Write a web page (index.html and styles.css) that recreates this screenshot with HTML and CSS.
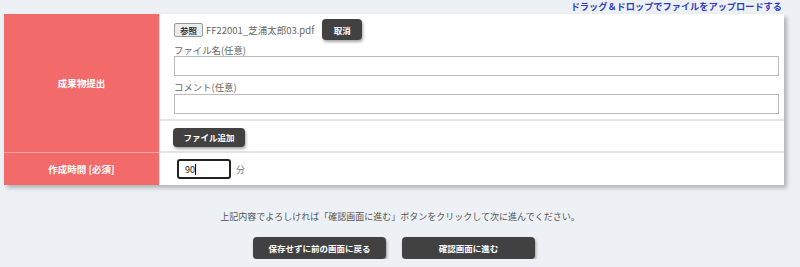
FILE: index.html
```html
<!DOCTYPE html>
<html lang="ja">
<head>
  <meta charset="UTF-8" />
  <title>成果物提出</title>
  <meta name="viewport" content="width=device-width, initial-scale=1.0"/>
  <link rel="stylesheet" href="styles.css">
</head>
<body>
  <div class="dnd">ドラッグ＆ドロップでファイルをアップロードする</div>

  <!-- Form Table -->
  <table class="form-table">
    <tr>
      <th rowspan="2">成果物提出</th>
      <td class="upload-cell">
        <div class="file-row">
          <span class="browse">参照</span>
          <span class="file-name">FF22001_芝浦太郎03.pdf</span>
          <button class="btn btn-cancel">取消</button>
        </div>
        <label class="field-label">ファイル名(任意)</label>
        <input class="text-input" type="text" />
        <label class="field-label">コメント(任意)</label>
        <input class="text-input" type="text" />
      </td>
    </tr>
    <tr>
      <td class="add-cell">
        <button class="btn btn-add">ファイル追加</button>
      </td>
    </tr>
    <tr>
      <th class="time-head">作成時間 [必須]</th>
      <td class="time-cell">
        <span class="time-input">90<span class="caret"></span></span>
        <span class="unit">分</span>
      </td>
    </tr>
  </table>

  <p class="note">上記内容でよろしければ「確認画面に進む」ボタンをクリックして次に進んでください。</p>

  <div class="actions">
    <button class="btn btn-big">保存せずに前の画面に戻る</button>
    <button class="btn btn-big">確認画面に進む</button>
  </div>
</body>
</html>
```

FILE: styles.css
```css
body {
  margin: 0;
  background-color: #edf1f5;
  color: #555;
  font-family: "Noto Sans CJK JP", "Noto Sans", sans-serif;
  font-size: 9px;
}
.dnd {
  height: 14px;
  line-height: 12px;
  text-align: right;
  padding-right: 18px;
  color: #2d3cc0;
  font-weight: bold;
  font-size: 9.2px;
}
.form-table {
  margin-left: 4px;
  width: 780px;
  border-collapse: collapse;
  background: #fff;
  box-shadow: 3px 3px 4px rgba(0, 0, 0, 0.25);
}
.form-table th {
  width: 155px;
  padding: 0;
  background: #f26a6a;
  color: #fff;
  font-size: 9.5px;
  font-weight: bold;
  border-bottom: 1px solid #f8a4a4;
}
.form-table th.time-head {
  border-bottom: none;
}
.form-table td {
  padding: 0 5px 0 14px;
  border-left: 1px solid #e6e6e6;
}
.upload-cell {
  height: 95px;
  padding-top: 5px !important;
  padding-bottom: 5px !important;
  border-bottom: 2px solid #e4e4e4;
  vertical-align: top;
}
.file-row {
  display: flex;
  align-items: center;
  height: 21px;
}
.browse {
  box-sizing: border-box;
  width: 29px;
  height: 14px;
  line-height: 12px;
  text-align: center;
  background: #ececec;
  border: 1px solid #999;
  border-radius: 2px;
  color: #333;
  font-weight: bold;
  font-size: 8.5px;
}
.file-name {
  margin-left: 3px;
  color: #666;
  font-size: 9.5px;
}
.btn {
  border: none;
  background: #414141;
  color: #fff;
  font-family: inherit;
  font-weight: bold;
  font-size: 8.5px;
  border-radius: 4px;
  box-shadow: 1px 2px 3px rgba(0, 0, 0, 0.35);
  padding: 0;
}
.btn-cancel {
  width: 40px;
  height: 21px;
  margin-left: 8px;
}
.field-label {
  display: block;
  box-sizing: border-box;
  height: 16px;
  padding-top: 3px;
  line-height: 14px;
  color: #666;
  font-size: 9.4px;
}
.field-label + .text-input + .field-label {
  height: 18px;
  padding-top: 4px;
}
.text-input {
  display: block;
  box-sizing: border-box;
  width: 605px;
  height: 20px;
  margin: 0;
  border: 1px solid #bbb;
  background: #fff;
}
.add-cell {
  height: 30px;
  border-bottom: 2px solid #e4e4e4;
}
.btn-add {
  width: 72px;
  height: 19px;
  margin-left: -1px;
  margin-top: 2px;
}
.time-cell {
  height: 32px;
}
.time-input {
  display: inline-flex;
  align-items: center;
  box-sizing: border-box;
  width: 54px;
  height: 20px;
  margin-left: 3px;
  padding-left: 6px;
  border: 2px solid #222;
  border-radius: 3px;
  color: #222;
  vertical-align: middle;
}
.caret {
  display: inline-block;
  width: 1px;
  height: 11px;
  background: #000;
}
.unit {
  margin-left: 3px;
  color: #777;
  vertical-align: middle;
}
.note {
  margin: 25px 0 0;
  text-align: center;
  color: #555;
  line-height: 14px;
}
.actions {
  display: flex;
  justify-content: center;
  gap: 16px;
  margin-top: 13px;
  padding-right: 12px;
}
.btn-big {
  width: 133px;
  height: 22px;
}
```
